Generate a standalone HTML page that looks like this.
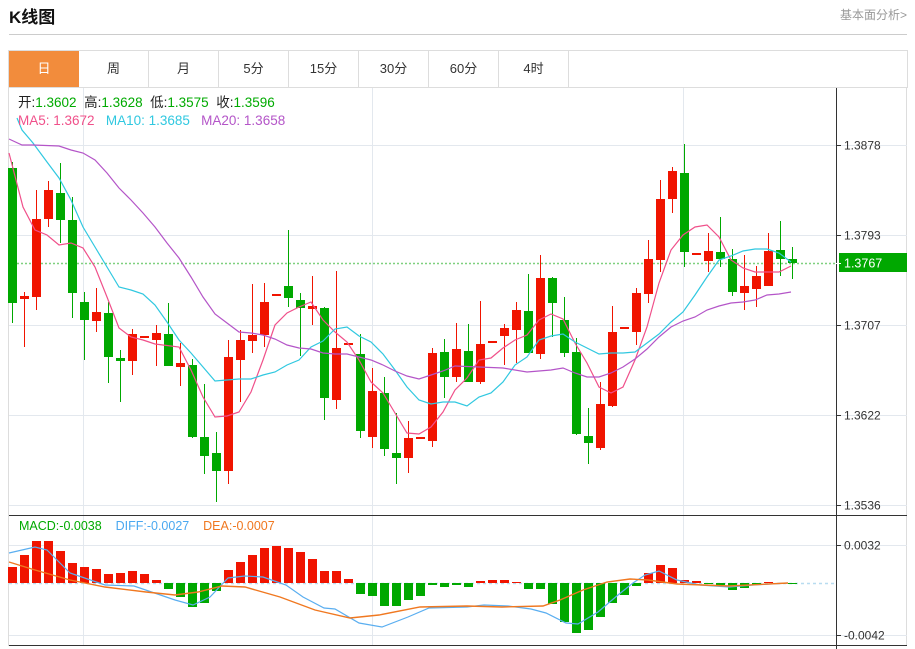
<!DOCTYPE html>
<html><head><meta charset="utf-8"><style>
body{margin:0;background:#fff;width:915px;height:649px;overflow:hidden;font-family:"Liberation Sans","Noto Sans CJK SC",sans-serif;position:relative}
.t{position:absolute;left:9px;top:3px;font-size:17px;font-weight:bold;color:#111}
.r{position:absolute;right:8px;top:6px;font-size:12px;color:#999}
.hl{position:absolute;left:9px;top:34px;width:898px;height:1px;background:#ccc}
.tabs{position:absolute;left:8px;top:50px;width:898px;height:36px;border:1px solid #ddd;box-sizing:content-box}
.tab{position:absolute;top:0;width:70px;height:36px;line-height:36px;text-align:center;font-size:13px;color:#333;border-right:1px solid #ddd;box-sizing:border-box}
.on{background:#f28c3c;color:#fff;border-right:none}
.lg{position:absolute;font-size:13.5px;white-space:nowrap;line-height:16px}
</style></head><body>
<div class="t">K线图</div><div class="r">基本面分析&gt;</div><div class="hl"></div>
<div class="tabs">
<div class="tab on" style="left:0">日</div><div class="tab" style="left:70px">周</div><div class="tab" style="left:140px">月</div><div class="tab" style="left:210px">5分</div><div class="tab" style="left:280px">15分</div><div class="tab" style="left:350px">30分</div><div class="tab" style="left:420px">60分</div><div class="tab" style="left:490px">4时</div>
</div>
<svg id="s" width="915" height="649" style="position:absolute;left:0;top:0" xmlns="http://www.w3.org/2000/svg"></svg>
<div class="lg" style="left:18px;top:95px;color:#222">开:<span style="color:#0a0">1.3602</span>&nbsp;&nbsp;高:<span style="color:#0a0">1.3628</span>&nbsp;&nbsp;低:<span style="color:#0a0">1.3575</span>&nbsp;&nbsp;收:<span style="color:#0a0">1.3596</span></div>
<div class="lg" style="left:18px;top:113px"><span style="color:#f0508a">MA5: 1.3672</span>&nbsp;&nbsp;&nbsp;<span style="color:#30c8e0">MA10: 1.3685</span>&nbsp;&nbsp;&nbsp;<span style="color:#b455c8">MA20: 1.3658</span></div>
<div class="lg" style="left:19px;top:518px;font-size:12.5px"><span style="color:#0a0">MACD:-0.0038</span>&nbsp;&nbsp;&nbsp;&nbsp;<span style="color:#4aa8f0">DIFF:-0.0027</span>&nbsp;&nbsp;&nbsp;&nbsp;<span style="color:#f07820">DEA:-0.0007</span></div>
<script>
var S=document.getElementById('s'),h='';
function L(x1,y1,x2,y2,c,w,e){h+='<line x1="'+x1+'" y1="'+y1+'" x2="'+x2+'" y2="'+y2+'" stroke="'+c+'" stroke-width="'+(w||1)+'" '+(e||'')+'/>';}
L(8.5,87,8.5,646,'#ddd');L(906.5,87,906.5,646,'#ddd');
[145,235,325,415,505,545,635].forEach(function(y){L(9,y+.5,907,y+.5,'#e3e8ee');});
[83,372,683].forEach(function(x){L(x+.5,88,x+.5,645,'#e3e8ee');});
L(9,263.5,836,263.5,'#7fd07f',1.5,'stroke-dasharray="2,2"');
L(9,583.5,836,583.5,'#b8dcf0',1.5,'stroke-dasharray="3,3"');
L(836.5,88,836.5,649,'#333');L(9,515.5,907,515.5,'#333');L(9,645.5,907,645.5,'#333');
var ax=[[145,'1.3878'],[235,'1.3793'],[325,'1.3707'],[415,'1.3622'],[505,'1.3536'],[545,'0.0032'],[635,'-0.0042']];
ax.forEach(function(a){L(836,a[0]+.5,841,a[0]+.5,'#333');h+='<text x="844" y="'+(a[0]+4.5)+'" font-size="12" fill="#333" font-family="Liberation Sans">'+a[1]+'</text>';});
h+='<rect x="839" y="253" width="68" height="19" fill="#00a800"/>';L(836,263.5,841,263.5,'#fff');
h+='<text x="844" y="267.5" font-size="12.5" fill="#fff" font-family="Liberation Sans">1.3767</text>';
var C=[['g',168,303,162,323],['r',296,299,292,347],['r',219,297,190,310],['r',190,219,181,227],['g',193,220,163,243],['g',220,293,197,318],['g',302,320,292,360],['r',312,321,288,332],['g',313,357,302,383],['g',358,361,350,402],['r',334,361,329,375],['r',336,338,336,338],['r',333,340,325,366],['g',334,366,303,366],['r',363,367,343,386],['g',365,437,359,438],['g',437,456,384,474],['g',453,471,432,502],['r',357,471,340,484],['r',340,360,330,402],['r',335,341,284,353],['r',302,335,283,347],['r',294,296,294,296],['g',286,298,230,307],['g',300,308,293,356],['r',306,309,276,325],['g',308,398,307,420],['r',348,400,271,409],['r',343,345,343,345],['g',354,431,334,438],['r',391,437,368,448],['g',393,449,377,456],['g',453,458,413,484],['r',438,458,421,473],['r',437,439,437,439],['r',353,441,348,447],['g',352,377,339,398],['r',349,377,323,382],['g',351,382,324,382],['r',344,382,301,384],['r',341,343,341,343],['r',328,336,324,365],['r',310,330,302,363],['g',311,353,274,353],['r',278,354,255,359],['g',278,303,277,337],['g',320,353,297,357],['g',352,434,338,435],['g',436,443,408,464],['r',404,448,382,450],['r',332,406,306,407],['r',327,329,327,329],['r',293,332,288,345],['r',259,294,240,303],['r',199,260,180,272],['r',171,199,167,213],['g',173,252,144,267],['r',253,255,253,255],['r',251,261,233,272],['g',252,259,217,267],['g',259,292,249,296],['r',286,293,255,310],['r',276,289,266,307],['r',251,286,233,286],['g',250,259,221,276],['g',259,263,247,279]];
C.forEach(function(c,i){var x=12+12*i,col=c[0]=='r'?'#f01400':'#00a800';
L(x+.5,c[3],x+.5,c[4],col);var bh=Math.max(c[2]-c[1],2);h+='<rect x="'+(x-4)+'" y="'+c[1]+'" width="9" height="'+bh+'" fill="'+col+'"/>';});
function P(pts,c,w){h+='<polyline fill="none" stroke="'+c+'" stroke-width="'+(w||1.2)+'" points="'+pts+'"/>';}
P('9,153 23,207 35,230 47,235 59,245 71,243 83,248 95,267 107,297 119,328 131,337 143,340 155,344 179,347 191,370 203,397 215,417 227,416 239,412 251,392 263,360 275,325 287,313 299,307 311,302 323,320 335,332 347,342 359,360 371,382 383,393 395,413 407,433 419,434 431,427 443,412 455,390 467,378 479,360 491,358 503,348 515,340 527,335 539,320 551,314 563,319 575,343 587,363 599,387 611,393 623,387 635,360 647,327 659,283 671,250 683,235 695,227 707,225 719,237 731,260 743,268 755,272 767,272 779,272 791,266','#f0508a');
P('17,118 22,130 33,143 47,162 59,178 71,200 83,227 95,247 107,267 119,287 131,290 143,294 155,305 167,322 179,340 191,353 203,367 215,381 227,380 239,379 251,379 263,375 275,372 287,365 299,360 311,347 323,341 335,329 347,327 359,336 371,342 383,354 395,370 407,387 419,400 431,404 443,402 455,402 467,406 479,397 491,393 503,382 515,365 527,357 539,340 551,336 563,334 575,342 587,348 599,354 611,353 623,353 635,352 647,343 659,334 671,322 683,312 695,295 707,277 719,260 731,256 743,251 755,249 767,249 779,253 791,262','#30c8e0');
P('9,139 22,145 33,145 59,146 71,150 83,153 95,160 107,173 119,188 131,200 143,213 155,227 167,243 179,258 191,277 203,297 215,314 227,323 239,332 251,333 263,335 275,339 287,345 299,348 311,349 323,353 335,354 347,354 359,357 371,360 383,365 395,371 407,376 419,379 431,375 443,371 455,366 479,367 503,368 527,372 551,370 563,368 575,373 587,377 599,377 611,373 623,367 635,359 647,349 659,337 671,327 683,321 695,317 707,310 719,306 731,303 743,302 755,300 767,295 779,294 791,292','#b455c8');
var M=[567,555,541,541,551,563,567,569,574,573,571,574,580,589,597,607,603,591,570,562,555,548,546,548,552,559,571,571,579,594,596,606,606,600,596,585,587,585,587,581,580,580,582,589,589,604,622,633,630,617,603,595,586,573,565,568,580,581,583,585,590,588,585,582,583,583];
M.forEach(function(y,i){var x=12+12*i;var col,t,hh;if(y<583){col='#f01400';t=y;hh=583-y;}else{col='#00a800';t=583;hh=y-583;}if(hh<1)hh=1;h+='<rect x="'+(x-4)+'" y="'+t+'" width="9" height="'+hh+'" fill="'+col+'"/>';});
P('9,553 35,547 47,550 70,573 105,585 134,586 175,600 193,605 210,597 228,578 245,576 263,577 286,585 303,597 324,608 335,609 359,623 382,627 408,617 429,608 467,607 484,605 508,606 531,609 546,613 566,623 578,624 598,612 618,595 633,583 645,575 659,571 677,580 700,585 729,587 753,585 788,583','#5aaef0');
P('9,562 35,570 70,580 105,587 146,592 175,595 198,592 222,586 245,587 280,597 315,610 350,618 379,615 420,607 467,606 502,607 543,606 560,600 583,590 607,582 630,579 648,580 677,584 729,586 788,583','#f07820',1.4);
S.innerHTML=h;
</script>
</body></html>
